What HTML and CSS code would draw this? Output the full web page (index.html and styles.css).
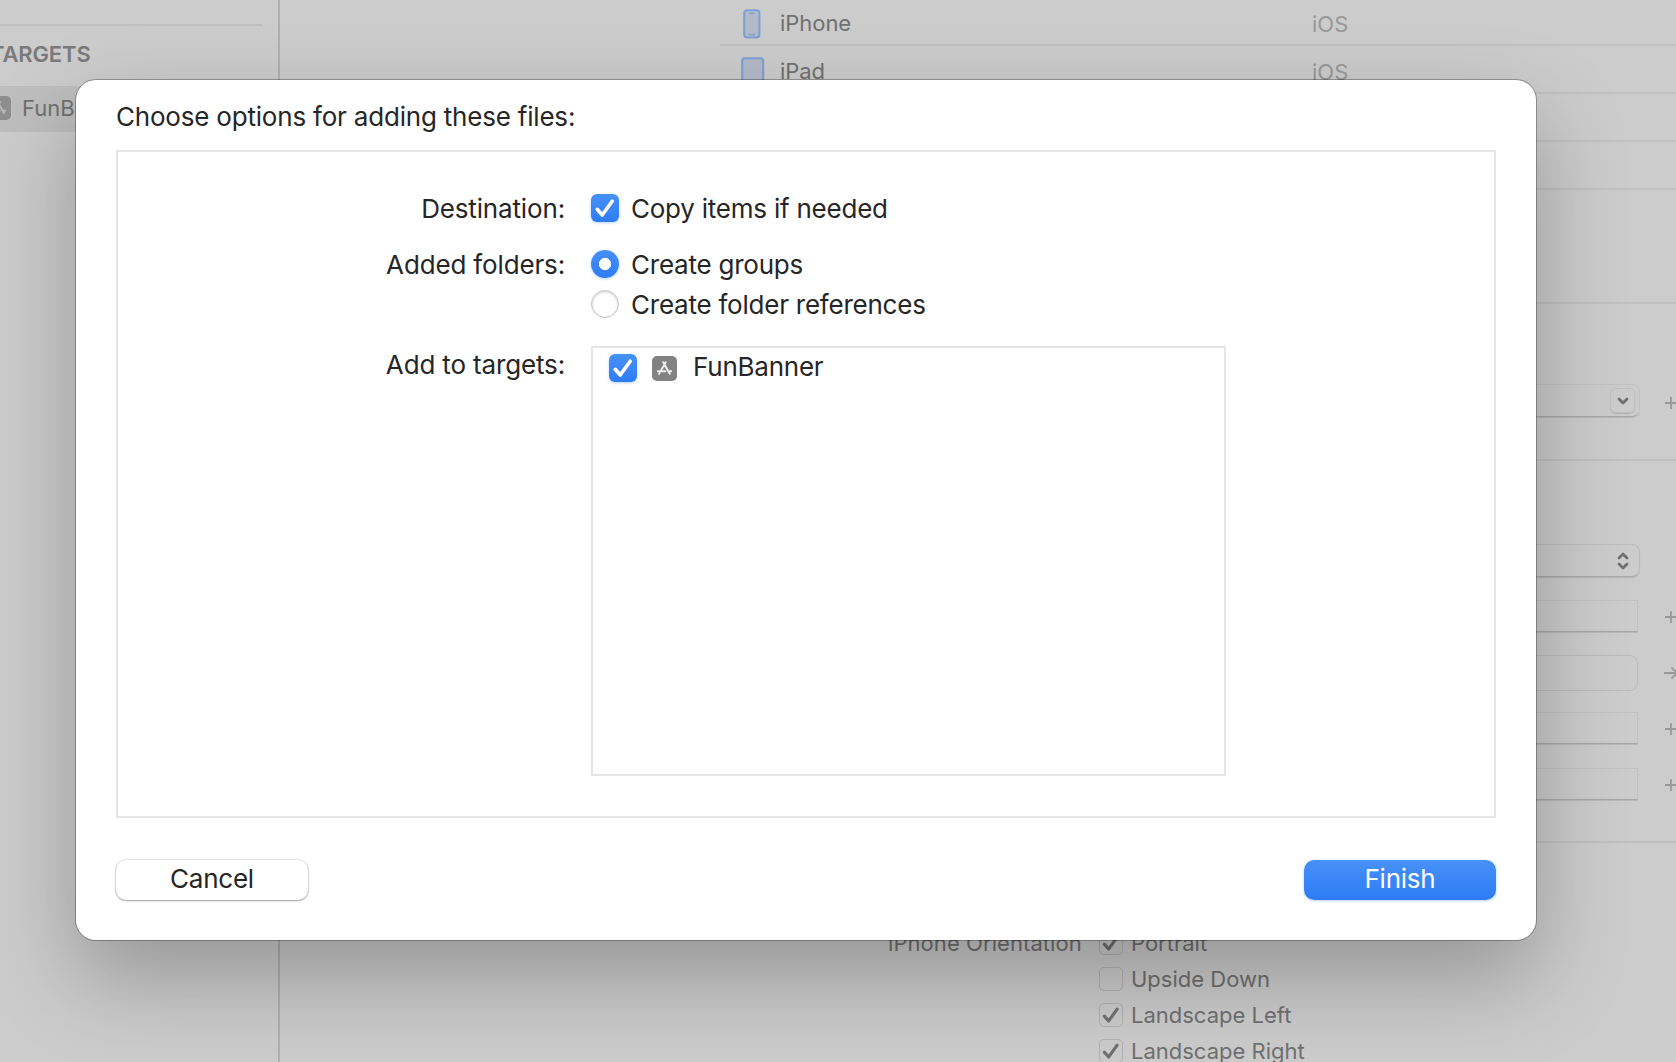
FILE: index.html
```html
<!DOCTYPE html>
<html lang="en">
<head>
<meta charset="utf-8">
<title>FunBanner</title>
<link rel="stylesheet" href="styles.css">
</head>
<body>
<svg class="defs" width="0" height="0">
  <symbol id="app" viewBox="0 0 25 25">
    <rect width="25" height="25" rx="5" fill="currentColor"/>
    <g fill="none" stroke="var(--glyph)" stroke-width="1.9" stroke-linecap="round">
      <path d="M13.7 6.2 9 14.4M11.2 6.2l6.6 11.6M5.8 15.2h7.6M16.6 15.2h2.6M7.6 17l-.5.9"/>
    </g>
  </symbol>
  <symbol id="check" viewBox="0 0 28 28">
    <path d="M6.2 15.3 11.2 21 21.2 7.2" fill="none" stroke="currentColor" stroke-width="3.6" stroke-linecap="round" stroke-linejoin="round"/>
  </symbol>
  <symbol id="plus" viewBox="0 0 14 14">
    <path d="M7 1v12M1 7h12" fill="none" stroke="currentColor" stroke-width="1.8"/>
  </symbol>
</svg>

<div class="window">
  <aside class="sidebar">
    <div class="sidebar-rule"></div>
    <h2 class="sidebar-title">TARGETS</h2>
    <div class="target"><svg class="app-icon"><use href="#app"/></svg><span>FunBanner</span></div>
  </aside>
  <main class="editor">
    <div class="platforms">
      <div class="platform">
        <svg class="device" viewBox="0 0 24 30"><rect x="3.2" y="1.2" width="15.2" height="27.2" rx="3" fill="#b3bac9" stroke="#7f9fd4" stroke-width="2"/><path d="M8.3 4.4h5M7.5 25.6h6.6" stroke="#7f9fd4" stroke-width="1.5"/></svg>
        <span class="name">iPhone</span><span class="os">iOS</span>
      </div>
      <div class="platform">
        <svg class="device" viewBox="0 0 24 30"><rect x="1.2" y="1.2" width="21" height="27.6" rx="2.5" fill="#b3bac9" stroke="#7f9fd4" stroke-width="2"/></svg>
        <span class="name">iPad</span><span class="os">iOS</span>
      </div>
      <div class="platform"></div>
      <div class="platform"></div>
    </div>
    <section class="gap"></section>
    <section class="identity">
      <div class="row"><div class="field combo"><span class="drop"><svg viewBox="0 0 12 8"><path d="M2 2l4 4 4-4"/></svg></span></div><svg class="add"><use href="#plus"/></svg></div>
    </section>
    <section class="deployment">
      <div class="row"><div class="field popup"><svg viewBox="0 0 12 18"><path d="M2 6l4-4 4 4M2 12l4 4 4-4"/></svg></div></div>
      <div class="row"><div class="field"></div><svg class="add"><use href="#plus"/></svg></div>
      <div class="row"><div class="field rounded"></div><svg class="add" viewBox="0 0 14 14"><path d="M0 7h13M7.5 1.5 13 7l-5.5 5.5" fill="none" stroke="currentColor" stroke-width="1.8"/></svg></div>
      <div class="row"><div class="field"></div><svg class="add"><use href="#plus"/></svg></div>
      <div class="row"><div class="field"></div><svg class="add"><use href="#plus"/></svg></div>
    </section>
    <section class="orientation">
      <span class="caption">iPhone Orientation</span>
      <div class="choices">
        <div class="choice"><span class="tick"><svg><use href="#check"/></svg></span><span>Portrait</span></div>
        <div class="choice"><span class="tick"></span><span>Upside Down</span></div>
        <div class="choice"><span class="tick"><svg><use href="#check"/></svg></span><span>Landscape Left</span></div>
        <div class="choice"><span class="tick"><svg><use href="#check"/></svg></span><span>Landscape Right</span></div>
      </div>
    </section>
  </main>
</div>

<div class="sheet" role="dialog">
  <h1 class="sheet-title">Choose options for adding these files:</h1>
  <div class="options">
    <div class="option">
      <span class="label">Destination:</span>
      <div class="item"><span class="box"><svg><use href="#check"/></svg></span><span>Copy items if needed</span></div>
    </div>
    <div class="option folders">
      <span class="label">Added folders:</span>
      <div class="radios">
        <div class="item"><span class="radio on"></span><span>Create groups</span></div>
        <div class="item"><span class="radio"></span><span>Create folder references</span></div>
      </div>
    </div>
    <div class="option targets">
      <span class="label">Add to targets:</span>
      <div class="list">
        <div class="list-row"><span class="box"><svg><use href="#check"/></svg></span><svg class="app-icon"><use href="#app"/></svg><span>FunBanner</span></div>
      </div>
    </div>
  </div>
  <div class="actions">
    <button class="button">Cancel</button>
    <button class="button primary">Finish</button>
  </div>
</div>
</body>
</html>
```
FILE: styles.css
```css
* { box-sizing: border-box; }
html, body { height: 100%; }
body {
  margin: 0;
  overflow: hidden;
  position: relative;
  background: #ccc;
  font-family: Inter, "Liberation Sans", sans-serif;
  font-size: 22px;
  color: #707070;
}
svg { display: block; flex: none; }
.defs { position: absolute; }

.window { display: grid; grid-template-columns: 280px 1fr; height: 1062px; overflow: hidden; }

.sidebar { border-right: 2px solid #b0b0b0; padding-top: 24px; }
.sidebar-rule { height: 2px; width: 262px; background: #c0c0c0; }
.sidebar-title { margin: 0 0 0 -10px; height: 60px; padding-top: 15px; font-size: 22px; line-height: 27px; font-weight: 600; letter-spacing: -.15px; color: #7a7a7a; }
.target { --glyph: #bcbcbc; height: 46px; background: #bebebe; display: flex; align-items: center; gap: 11px; margin-left: -13px; padding-bottom: 2px; }
.target .app-icon { width: 24px; height: 24px; color: #8f8f8f; }

.editor { overflow: hidden; }
.platforms { padding-left: 440px; margin-top: -2px; }
.platform { height: 48px; border-bottom: 2px solid #c0c0c0; display: flex; align-items: center; padding: 3px 0 0 21px; }
.device { width: 24px; height: 30px; margin: 2px 15px 0 0; }
.name { width: 532px; letter-spacing: -.05px; }
.os { color: #999; padding-top: 2px; }

.gap { height: 114px; border-bottom: 2px solid #c0c0c0; }
.identity { height: 157px; border-bottom: 2px solid #c0c0c0; padding-top: 80px; }
.deployment { height: 382px; border-bottom: 2px solid #c0c0c0; padding-top: 83px; }
.row { height: 56px; padding-left: 841px; display: flex; align-items: flex-start; }
.field { flex: none; width: 517px; height: 32px; border: 1px solid #c1c1c1; border-bottom-color: #a8a8a8; box-shadow: 0 1px 0 #b8b8b8; }
.field svg { fill: none; stroke: #707070; stroke-width: 2.8; stroke-linecap: round; stroke-linejoin: round; }
.row .add { width: 14px; height: 14px; margin: 10px 0 0 26px; color: #999; }
.combo, .popup { width: 519px; height: 33px; border-radius: 8px; display: flex; align-items: center; justify-content: flex-end; }
.row .combo + .add { margin: 12px 0 0 24px; }
.drop { width: 25px; height: 25px; margin-right: 4px; border: 1px solid #c0c0c0; border-radius: 6px; box-shadow: 0 1px 1px #b0b0b0; display: grid; place-items: center; }
.drop svg { width: 12px; height: 8px; }
.popup { padding-right: 10px; border-color: #bcbcbc #bcbcbc #aaa; box-shadow: 0 1px 1px #b4b4b4; }
.popup svg { width: 12px; height: 18px; }
.rounded { height: 36px; margin-top: -1px; border-radius: 8px; border-color: #bbb; box-shadow: none; }

.orientation { display: flex; padding: 88px 0 0 608px; }
.caption { width: 193px; margin-right: 18px; line-height: 24px; white-space: nowrap; letter-spacing: .07px; }
.choices { display: grid; row-gap: 12px; }
.choice { display: flex; gap: 8px; height: 24px; line-height: 24px; }
.tick { width: 24px; height: 24px; border: 1px solid rgba(0,0,0,.12); border-radius: 5px; }
.tick svg { width: 24px; height: 24px; margin: -1px; }

.sheet {
  position: absolute; left: 76px; top: 80px; width: 1460px; height: 860px;
  padding: 0 40px; border-radius: 20px; background: #fff; color: #262626; font-size: 26px; letter-spacing: -.23px;
  box-shadow: 0 0 0 1px rgba(0,0,0,.28), 0 38px 90px rgba(0,0,0,.27);
}
.sheet-title { margin: 0; height: 70px; padding-top: 21px; font-size: 26px; line-height: 32px; font-weight: 400; letter-spacing: -.2px; }
.options { height: 668px; border: 2px solid #e5e5e5; padding-top: 42px; }
.option { display: grid; grid-template-columns: 447px 1fr; column-gap: 26px; line-height: 30px; }
.label { text-align: right; letter-spacing: -.15px; }
.item { display: flex; gap: 12px; height: 28px; }
.folders { margin-top: 26px; }
.radios { display: grid; row-gap: 12px; }
.box, .radio { width: 28px; height: 28px; flex: none; }
.box { border-radius: 6px; color: #fff; background: linear-gradient(#4791f8, #2f7bf6); box-shadow: 0 1px 3px rgba(47,123,246,.35); }
.box svg { width: 28px; height: 28px; }
.radio { border-radius: 50%; border: 1px solid #c4c4c4; box-shadow: inset 0 1px 3px rgba(0,0,0,.2); }
.radio.on { border: 0; background: radial-gradient(circle, #fff 5.8px, transparent 6.4px), linear-gradient(#4791f8, #2f7bf6); box-shadow: 0 1px 3px rgba(47,123,246,.35); }
.targets { margin-top: 28px; }
.targets .label { padding-top: 4px; }
.list { width: 635px; height: 430px; border: 2px solid #e5e5e5; }
.list-row { --glyph: #f0f0f0; display: flex; padding: 6px 16px; line-height: 26px; }
.list-row .app-icon { width: 25px; height: 25px; margin: 2px 16px 0 15px; color: #828282; }
.actions { display: flex; justify-content: space-between; margin-top: 42px; }
.button { width: 192px; height: 40px; padding: 0 0 3px; border: 0; border-radius: 10px; background: #fff; color: #262626; font: inherit; letter-spacing: inherit; box-shadow: 0 0 0 1px rgba(0,0,0,.09), 0 1px 2px rgba(0,0,0,.3); }
.primary { color: #fff; background: linear-gradient(#4791f8, #2f7bf6); box-shadow: 0 1px 3px rgba(47,123,246,.35); }
```
